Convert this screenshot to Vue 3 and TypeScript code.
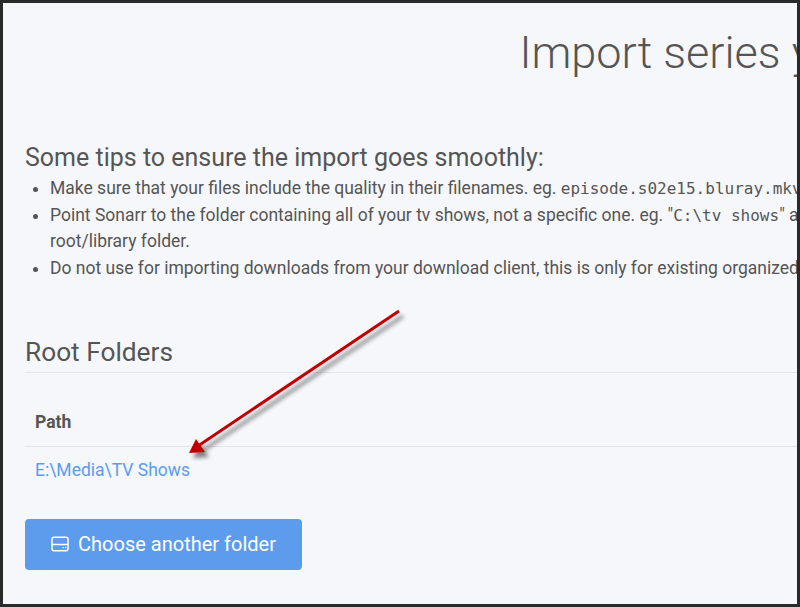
<script setup lang="ts">
const tips = [
  { before: 'Make sure that your files include the quality in their filenames. eg. ', code: 'episode.s02e15.bluray.mkv', after: '' },
  { before: 'Point Sonarr to the folder containing all of your tv shows, not a specific one. eg. "', code: 'C:\\tv shows', after: '" and not "C:\\tv shows\\the simpsons", this should be your root/library folder.' },
  { before: 'Do not use for importing downloads from your download client, this is only for existing organized libraries, not unsorted files.', code: '', after: '' },
]
</script>

<template>
  <div class="frame">
    <div class="page">
      <h1 class="title">Import series you already have</h1>
      <section class="tips">
        <h2 class="tips-title">Some tips to ensure the import goes smoothly:</h2>
        <ul class="tips-list">
          <li v-for="(tip, i) in tips" :key="i">{{ tip.before }}<code v-if="tip.code">{{ tip.code }}</code>{{ tip.after }}</li>
        </ul>
      </section>
      <section class="roots">
        <h2 class="roots-title">Root Folders</h2>
        <table class="table">
          <thead><tr><th>Path</th></tr></thead>
          <tbody><tr><td><a class="link">E:\Media\TV Shows</a></td></tr></tbody>
        </table>
      </section>
      <button class="btn" type="button">
        <svg class="btn-icon" width="18" height="16" viewBox="0 0 18 16" fill="none" stroke="currentColor" stroke-width="1.5">
          <rect x="1" y="1.25" width="16" height="13.5" rx="2" />
          <path d="M1 8.5h16" />
          <path d="M11.5 11.6h1.2M14 11.6h1.2" stroke-width="1.4" />
        </svg>
        <span>Choose another folder</span>
      </button>
    </div>
    <svg class="arrow" width="800" height="607" viewBox="0 0 800 607">
      <defs>
        <filter id="arrow-shadow" x="-10%" y="-10%" width="130%" height="130%">
          <feGaussianBlur stdDeviation="2" />
        </filter>
      </defs>
      <g filter="url(#arrow-shadow)" transform="translate(4 5)" fill="#555" stroke="#555" opacity="0.75">
        <path d="M399 311 L198 446" stroke-width="3" fill="none" />
        <path d="M189 453 L196 439 L205 452 Z" stroke="none" />
      </g>
      <path d="M399 311 L198 446" stroke="#c00000" stroke-width="3" fill="none" />
      <path d="M189 453 L196 439 L205 452 Z" fill="#c00000" />
    </svg>
  </div>
</template>

<style>
html, body { margin: 0; padding: 0; }
</style>

<style scoped>
.frame {
  position: relative;
  width: 800px;
  height: 607px;
  box-sizing: border-box;
  border: 3px solid #2a2a2a;
  background: #f5f7fb;
  overflow: hidden;
  font-family: Roboto, sans-serif;
  color: #555;
}
.page {
  width: 1590px;
  padding: 0 22px;
  box-sizing: content-box;
}
.title {
  margin: 0;
  padding-top: 23px;
  font-size: 45px;
  font-weight: 300;
  line-height: 54px;
  text-align: center;
}
.tips { margin-top: 63px; }
.tips-title {
  margin: 0;
  font-size: 25px;
  font-weight: 400;
  line-height: 29px;
}
.tips-list {
  margin: 3px 0 0;
  padding-left: 25px;
  font-size: 17.5px;
  line-height: 26.6px;
  width: 1230px;
}
code {
  font-family: "DejaVu Sans Mono", monospace;
  font-size: 16px;
  line-height: 1;
}
.roots { margin-top: 54px; }
.roots-title {
  margin: 0;
  padding-bottom: 3px;
  border-bottom: 1px solid #e2e5ea;
  font-size: 26.25px;
  font-weight: 400;
  line-height: 34px;
}
.table {
  width: 100%;
  border-collapse: collapse;
  margin-top: 37px;
  font-size: 17.5px;
}
.table th {
  padding: 0 10px 12px;
  text-align: left;
  font-weight: 700;
  line-height: 24px;
  border-bottom: 1px solid #e2e5ea;
}
.table td {
  padding: 11px 10px;
  line-height: 24px;
}
.link { color: #5d9cec; }
.btn {
  display: flex;
  align-items: center;
  justify-content: center;
  gap: 9px;
  width: 277px;
  height: 51px;
  margin-top: 26px;
  border: 0;
  border-radius: 4px;
  background: #5d9cec;
  color: #fff;
  font-family: inherit;
  font-size: 20px;
  padding: 0 0 1px;
}
.arrow {
  position: absolute;
  left: -3px;
  top: -3px;
  pointer-events: none;
}
</style>
